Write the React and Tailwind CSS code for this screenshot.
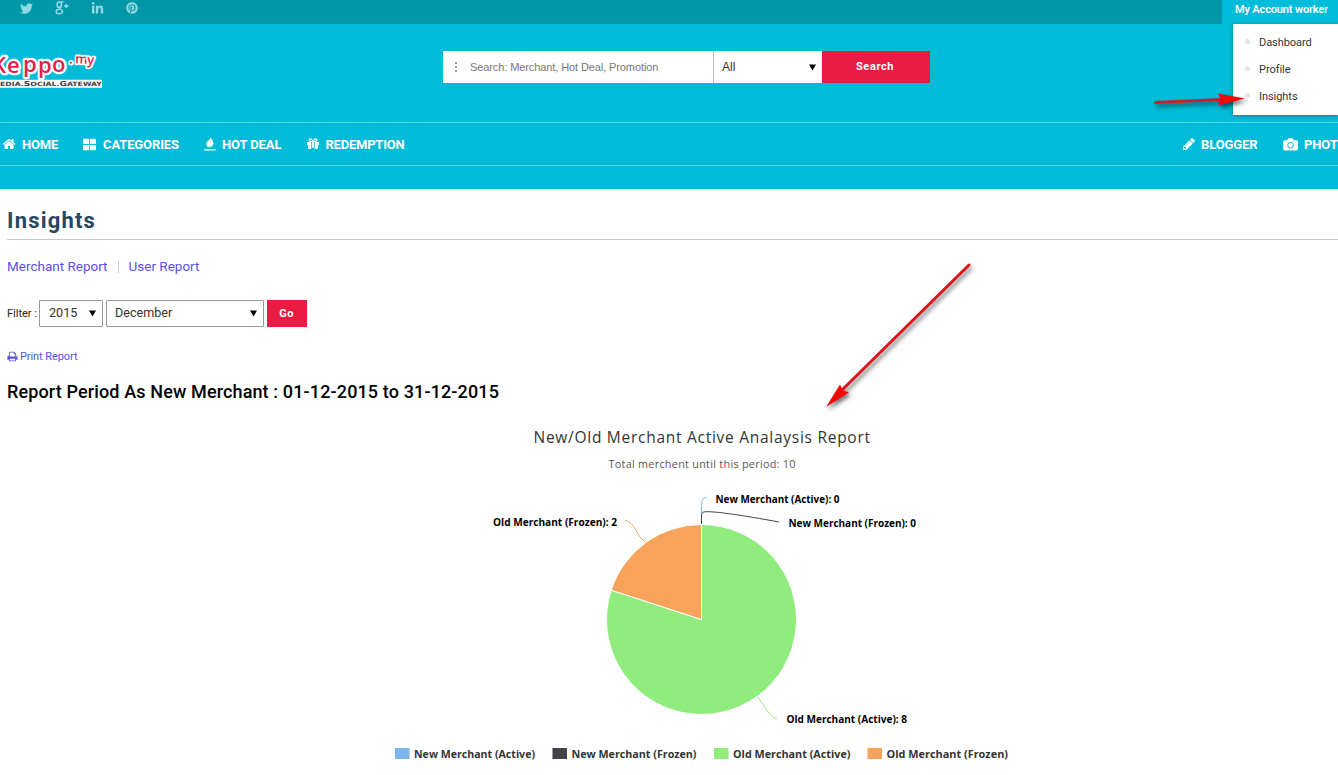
import React from "react";
import { FaTwitter, FaLinkedinIn, FaPinterest, FaThLarge } from "react-icons/fa";

const HOME = "M1472 992v480q0 26-19 45t-45 19h-384v-384h-256v384h-384q-26 0-45-19t-19-45v-480q0-1 .5-3t.5-3l575-474 575 474q1 2 1 6zm223-69l-62 74q-8 9-21 11h-3q-13 0-21-7l-692-577-692 577q-12 8-24 7-13-2-21-11l-62-74q-8-10-7-23.5t11-21.5l719-599q32-26 76-26t76 26l244 204v-195q0-14 9-23t23-9h192q14 0 23 9t9 23v408l219 182q10 8 11 21.5t-7 23.5z";
const PRINT = "M448 1536h896v-256h-896v256zm0-640h896v-384h-160q-40 0-68-28t-28-68v-160h-640v640zm1152 64q0-26-19-45t-45-19-45 19-19 45 19 45 45 19 45-19 19-45zm128 0v416q0 13-9.5 22.5t-22.5 9.5h-224v160q0 40-28 68t-68 28h-960q-40 0-68-28t-28-68v-160h-224q-13 0-22.5-9.5t-9.5-22.5v-416q0-79 56.5-135.5t135.5-56.5h64v-544q0-40 28-68t68-28h672q40 0 88 20t76 48l152 152q28 28 48 76t20 88v256h64q79 0 135.5 56.5t56.5 135.5z";
const PENCIL = "M491 1536l91-91-235-235-91 91v107h128v128h107zm523-928q0-22-22-22-10 0-17 7l-542 542q-7 7-7 17 0 22 22 22 10 0 17-7l542-542q7-7 7-17zm-54-192l416 416-832 832h-416v-416zm683 96q0 53-37 90l-166 166-416-416 166-165q36-38 90-38 53 0 91 38l235 234q37 39 37 91z";

function Glyph({ d, className }) {
  return <svg viewBox="0 0 1792 1792" className={className} fill="currentColor"><path d={d} /></svg>;
}

function GooglePlus() {
  return (
    <svg viewBox="0 0 14 14" className="h-[14px] w-[14px]" fill="none" stroke="currentColor" strokeWidth="1.6">
      <ellipse cx="4.3" cy="3.7" rx="2.2" ry="2.7" />
      <path d="M4.5 1h4M6 6.2c-2 .7-1.5 1.5 0 2.3M4.3 8.2C.2 8.2.2 12.8 4.1 12.8s4.2-2.9 2-4.2M9 5h4.6M11.3 2.8v4.5" />
    </svg>
  );
}

function Flame() {
  return (
    <svg viewBox="0 0 12 14" className="h-[14px] w-[12px]" fill="currentColor">
      <path d="M6.6 0C7 2 9.4 3.300 9.400 6c0 2.300-1.200 4-3.200 4.800.9-1.700.9-3-.2-4.300-.8 1.500-.9 2.800-.2 4.300C3.800 10.300 2.200 9 2.200 7c0-2.700 4-3.500 4.400-7zM.3 12.300h11.400v1.100H.3z" />
      <path d="M4 6h3v3H4z" />
    </svg>
  );
}

function Gift() {
  return (
    <svg viewBox="0 0 12 12" className="h-3 w-3" fill="currentColor">
      <path d="M0 3.900h4.300v3H0zM7.700 3.900H12v3H7.700zM1 6.500h3.300V11H2a1 1 0 0 1-1-1zM7.700 6.500H11V10a1 1 0 0 1-1 1H7.700zM5.100 3.900h1.800v5.800H5.100z" />
      <path d="M5.600 3.500H3.500a1.300 1.300 0 0 1 0-2.600C4.700.9 5.200 2.300 6 3.500 6.800 2.300 7.300.9 8.500.9a1.300 1.300 0 0 1 0 2.600H6.400" fill="none" stroke="currentColor" strokeWidth="1.200" />
    </svg>
  );
}

function Camera() {
  return (
    <svg viewBox="0 0 15 13" className="h-[13px] w-[15px]">
      <path d="M2 2.300h2.200L5 .8Q5.200.2 6 .2h3q.8 0 1 .6l.8 1.500H13a2 2 0 0 1 2 2V10.500a2 2 0 0 1-2 2H2a2 2 0 0 1-2-2V4.300a2 2 0 0 1 2-2z" fill="currentColor" />
      <circle cx="7.500" cy="7.200" r="2.800" fill="none" stroke="#00bcd8" strokeWidth="1" />
    </svg>
  );
}

function NavItem({ icon, children, className }) {
  return (
    <a className={"flex flex-none items-center text-[13px] font-bold text-white " + className}>
      {icon}<span className="translate-y-px whitespace-nowrap">{children}</span>
    </a>
  );
}

function Caret() {
  return <svg viewBox="0 0 8 7" className="h-[7px] w-[7px] flex-none" fill="#000"><path d="M0 0h8L4 7z" /></svg>;
}

function Select({ children, className }) {
  return (
    <div className={"flex h-[27px] items-center justify-between rounded-[1px] border border-[#999] text-[12.6px] text-[#333] " + className}>
      <span>{children}</span><Caret />
    </div>
  );
}

function Logo() {
  return (
    <svg viewBox="0 0 110 44" className="mt-6 h-[44px] w-[110px] flex-none">
      <g stroke="#fff" strokeLinejoin="round" paintOrder="stroke" fontFamily="'Open Sans', sans-serif">
        <g fill="#e3204b" fontWeight="600">
          <text x="-8 7 23 38 52" y="24.500 24.500 24 24.500 24" fontSize="22" strokeWidth="4.500">Keppo</text>
          <text x="69 75 87" y="16 15.500 16" fontSize="13" strokeWidth="3.500" transform="rotate(3 80 15)">.my</text>
        </g>
        <path d="M0 35.800H102" strokeWidth="8" />
        <text x="-9" y="38.300" fontSize="5.800" fill="#443d48" stroke="none" fontWeight="700" fontFamily="'DejaVu Sans', sans-serif" textLength="111" lengthAdjust="spacingAndGlyphs"><tspan fontSize="6.800">M</tspan>EDIA.<tspan fontSize="6.800">S</tspan>OCIAL.<tspan fontSize="6.800">G</tspan>ATEWAY</text>
      </g>
    </svg>
  );
}

function Header() {
  return (
    <header className="h-[189px] w-full overflow-hidden bg-[#00bcd8]">
      <div className="flex h-6 bg-[#0097a9]">
        <div className="flex h-4 flex-1 items-center pl-5 text-[#8fd9e3]">
          <FaTwitter className="mr-[22px] size-[13px]" />
          <span className="mr-[22px] flex"><GooglePlus /></span>
          <FaLinkedinIn className="mr-[22px] size-[13px]" />
          <FaPinterest className="size-3" />
        </div>
        <div className="w-[116px] bg-[#00bcd8] pl-[13px] text-[11px] leading-[19px] font-semibold tracking-[-0.15px] whitespace-nowrap text-white">My Account worker</div>
      </div>
      <div className="flex h-[98px] items-start">
        <Logo />
        <div className="mt-[27px] ml-[333px] flex h-8 w-[487px] flex-none bg-white">
          <div className="flex w-[270px] items-center pl-3">
            <svg viewBox="0 0 2 10" className="mr-[13px] h-[10px] w-[2px]" fill="#999"><path d="M0 0h2v2H0zM0 4h2v2H0zM0 8h2v2H0z" /></svg>
            <span className="font-['Liberation_Sans',sans-serif] text-[11px] tracking-[-0.1px] whitespace-nowrap text-[#777]">Search: Merchant, Hot Deal, Promotion</span>
          </div>
          <div className="flex w-[109px] items-center justify-between border-l border-[#bbb] pr-[6px] pl-2 font-['Liberation_Sans',sans-serif] text-xs text-[#333]">All<Caret /></div>
          <div className="w-[108px] bg-[#ea1c43] pr-[2px] text-center text-[11px] leading-[31px] font-bold tracking-[0.6px] text-white">Search</div>
        </div>
        <div className="ml-[303px] h-[91px] w-[105px] flex-none bg-white pt-[5px] pl-3 text-[11px] text-[#333] shadow-[0_1px_4px_rgba(0,0,0,0.3)]">
          {["Dashboard", "Profile", "Insights"].map((item) => (
            <div key={item} className="flex h-[27px] items-center tracking-[-0.05px]"><i className="mr-[9px] size-[5px] -translate-y-px rounded-full bg-[#e2e4e7]" /><span className="translate-y-px">{item}</span></div>
          ))}
        </div>
      </div>
      <nav className="flex h-11 items-center border-y border-[#59dae9]">
        <NavItem className="w-[80px] pl-[2px]" icon={<Glyph d={HOME} className="mr-[6px] size-[14px]" />}><span className="tracking-[-0.2px]">HOME</span></NavItem>
        <NavItem className="w-[124px] pl-[3px]" icon={<FaThLarge className="mr-[7px] size-[13px]" />}><span className="tracking-[-0.12px]">CATEGORIES</span></NavItem>
        <NavItem className="w-[103px]" icon={<span className="mr-[6px]"><Flame /></span>}><span className="tracking-[-0.1px]">HOT DEAL</span></NavItem>
        <NavItem className="w-[875px]" icon={<span className="mr-[6.5px]"><Gift /></span>}><span className="tracking-[-0.22px]">REDEMPTION</span></NavItem>
        <NavItem className="w-[101px]" icon={<Glyph d={PENCIL} className="mr-[5px] size-[14px]" />}><span className="tracking-[-0.1px]">BLOGGER</span></NavItem>
        <NavItem className="w-[90px]" icon={<span className="mr-[6px]"><Camera /></span>}><span className="tracking-[-0.1px]">PHOTO</span></NavItem>
      </nav>
    </header>
  );
}

const LEGEND = [
  [395, "#7cb5ec", "New Merchant (Active)", 121],
  [552.5, "#434348", "New Merchant (Frozen)", 125],
  [714, "#90ed7d", "Old Merchant (Active)", 117.5],
  [867.5, "#f7a35c", "Old Merchant (Frozen)", 121.5],
];

const LABELS = [
  [715.5, 503, "New Merchant (Active): 0", 124],
  [788.5, 527, "New Merchant (Frozen): 0", 127.5],
  [493, 526, "Old Merchant (Frozen): 2", 124],
  [786.5, 723, "Old Merchant (Active): 8", 120.5],
];

function Chart() {
  return (
    <svg viewBox="0 415 1338 360" className="h-[360px] w-[1338px]" fontFamily="'Open Sans', 'Noto Sans', sans-serif">
      <text x="533.5" y="443" fontSize="15.500" fill="#333" textLength="336.5">New/Old Merchant Active Analaysis Report</text>
      <text x="608.5" y="468" fontSize="10.800" fill="#555" textLength="187">Total merchent until this period: 10</text>
      <g fill="none" strokeWidth="1">
        <path d="M706 497.500C702 497.500 701.500 502 701.500 509V524" stroke="#7cb5ec" />
        <path d="M779 522C752 517 727 513 714 512C704 511.500 701.500 511 701.500 516V524" stroke="#434348" />
        <path d="M625 520.500C631 520.500 635 529 640 537L646 543" stroke="#f7a35c" />
        <path d="M777 718.500C771 718.500 766 708 757 696" stroke="#90ed7d" />
      </g>
      <g stroke="#fff" strokeLinejoin="round">
        <path d="M701.500 619.500V524.500A95 95 0 1 1 611.150 590.140Z" fill="#90ed7d" />
        <path d="M701.500 619.500L611.150 590.140A95 95 0 0 1 701.500 524.500Z" fill="#f7a35c" />
      </g>
      <g fontSize="10" fontWeight="700" fill="#000">
        {LABELS.map(([x, y, t, w]) => <text key={t} x={x} y={y} textLength={w} lengthAdjust="spacingAndGlyphs">{t}</text>)}
      </g>
      <g fontSize="11" fontWeight="700" fill="#333">
        {LEGEND.map(([x, c, t, w]) => (
          <g key={t}>
            <rect x={x} y="748" width="14.500" height="11" fill={c} />
            <text x={x + 19} y="758" textLength={w} lengthAdjust="spacingAndGlyphs">{t}</text>
          </g>
        ))}
      </g>
    </svg>
  );
}

function Arrows() {
  return (
    <svg viewBox="0 0 1338 775" className="pointer-events-none absolute top-0 left-0 h-[775px] w-[1338px]">
      <g className="drop-shadow-[2px_3px_2px_rgba(0,0,0,0.55)]">
        <path d="M969 265L841 391" stroke="#d9151b" strokeWidth="3" strokeLinecap="round" />
        <path d="M826 407L840 384.500L842.500 390L849 392.500Z" fill="#fa0505" />
        <path d="M1155.500 102.500L1222 99.500" stroke="#c92027" strokeWidth="3" strokeLinecap="round" />
        <path d="M1245 98.500L1218 93.500L1221 99L1218 105.500Z" fill="#fa0505" />
      </g>
    </svg>
  );
}

export default function App() {
  return (
    <div className="relative h-[775px] w-full overflow-hidden bg-white font-[Roboto,sans-serif]">
      <Header />
      <main className="flex h-[226px] flex-col pl-[7px]">
        <h1 className="h-[51px] border-b border-[#ccc] pt-[16px] text-[22px] leading-[32px] font-bold tracking-[1.2px] text-[#28475f]">Insights</h1>
        <div className="mt-4 flex h-[21px] items-center text-[13.5px] text-[#5a4fea]">
          <a>Merchant Report</a><i className="mx-[10px] h-3 w-px bg-[#ccc]" /><a>User Report</a>
        </div>
        <div className="mt-[23px] flex h-[27px] items-center text-[11px] text-[#222]">
          <span className="w-8 translate-y-px whitespace-nowrap">Filter :</span>
          <Select className="w-16 pr-[6px] pl-[9px]">2015</Select>
          <Select className="ml-[3px] w-[158px] pr-[6px] pl-2">December</Select>
          <button className="ml-[3px] h-[27px] w-10 bg-[#ea1c43] pt-px pr-px text-[11px] font-bold tracking-[0.5px] text-white">Go</button>
        </div>
        <a className="mt-[21px] flex h-4 items-center text-[11px] tracking-[-0.08px] text-[#5a4fea]"><Glyph d={PRINT} className="mr-[2px] size-[11px]" /><span className="translate-y-px">Print Report</span></a>
        <h2 className="mt-[15px] text-[18px] leading-[25px] font-medium tracking-[0.13px] text-black">Report Period As New Merchant : 01-12-2015 to 31-12-2015</h2>
      </main>
      <Chart />
      <Arrows />
    </div>
  );
}
